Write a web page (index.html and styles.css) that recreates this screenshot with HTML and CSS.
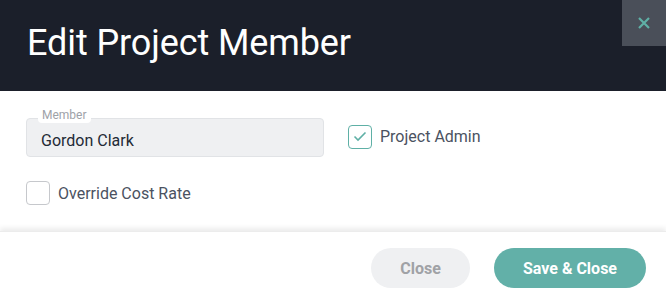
FILE: index.html
```html
<!DOCTYPE html>
<html lang="en">
<head>
  <meta charset="UTF-8" />
  <title>Edit Project Member</title>
  <link rel="stylesheet" href="styles.css">
</head>
<body>
  <div class="modal">
    <div class="modal-header">
      <h1 class="modal-title">Edit Project Member</h1>
      <button class="close-x" aria-label="Close">
        <svg width="12" height="12" viewBox="0 0 12 12"><path d="M1 1 L11 11 M11 1 L1 11" stroke="#5fb0a6" stroke-width="2.2" fill="none"/></svg>
      </button>
    </div>

    <div class="modal-body">
      <div class="row">
        <div class="field">
          <span class="field-label">Member</span>
          <div class="field-value">Gordon Clark</div>
        </div>
        <label class="check check-admin">
          <span class="box checked">
            <svg width="14" height="11" viewBox="0 0 14 11"><path d="M1.5 5.5 L5 9 L12.5 1.5" stroke="#5fb0a6" stroke-width="1.6" fill="none"/></svg>
          </span>
          Project Admin
        </label>
      </div>
      <label class="check">
        <span class="box"></span>
        Override Cost Rate
      </label>
    </div>

    <div class="modal-footer">
      <button class="btn btn-close">Close</button>
      <button class="btn btn-save">Save &amp; Close</button>
    </div>
  </div>
</body>
</html>
```

FILE: styles.css
```css
* {
  margin: 0;
  padding: 0;
  box-sizing: border-box;
}
body, html {
  height: 100%;
  font-family: Roboto, 'Liberation Sans', sans-serif;
  background: #fff;
  overflow: hidden;
}

.modal {
  display: flex;
  flex-direction: column;
  height: 100vh;
}

.modal-header {
  height: 91px;
  background: #1b1f2a;
  display: flex;
  justify-content: space-between;
  align-items: flex-start;
}

.modal-title {
  color: #fff;
  font-weight: 400;
  font-size: 36px;
  line-height: 1;
  padding: 25px 0 0 27px;
  letter-spacing: -0.1px;
}

.close-x {
  width: 44px;
  height: 46px;
  border: none;
  background: #4a4f59;
  display: flex;
  align-items: center;
  justify-content: center;
  cursor: pointer;
}

.modal-body {
  flex: 1;
  padding: 27px 26px 0;
}

.row {
  display: flex;
  align-items: center;
  gap: 24px;
}

.field {
  position: relative;
  width: 298px;
  height: 39px;
  background: #eff0f2;
  border: 1px solid #e1e3e6;
  border-radius: 4px;
  display: flex;
  align-items: center;
  padding: 6px 14px 0;
}

.field-label {
  position: absolute;
  top: -11px;
  left: 11px;
  background: #fff;
  border-radius: 4px;
  padding: 0 4px;
  font-size: 12px;
  line-height: 15px;
  color: #9ea2a8;
}

.field-value {
  font-size: 16px;
  color: #232a36;
}

.check {
  display: flex;
  align-items: center;
  gap: 8px;
  font-size: 16px;
  color: #4b5261;
}

.check-admin {
  margin-top: -2px;
}

.row + .check {
  margin-top: 24px;
}

.box {
  width: 24px;
  height: 24px;
  border: 1px solid #c6c8cc;
  border-radius: 4px;
  display: flex;
  align-items: center;
  justify-content: center;
}

.box.checked {
  border-color: #5fb0a6;
}

.modal-footer {
  height: 67px;
  box-shadow: 0 -3px 5px rgba(0, 0, 0, 0.08);
  border-top: 1px solid #ececec;
  display: flex;
  justify-content: flex-end;
  align-items: flex-start;
  gap: 24px;
  padding: 16px 20px 0 0;
}

.btn {
  height: 40px;
  border: none;
  border-radius: 20px;
  font-family: Roboto, 'Liberation Sans', sans-serif;
  font-weight: 700;
  font-size: 16px;
  cursor: pointer;
}

.btn-close {
  width: 99px;
  background: #eff0f2;
  color: #a0a2a6;
}

.btn-save {
  width: 152px;
  background: #62b0a8;
  color: #fff;
}
```
